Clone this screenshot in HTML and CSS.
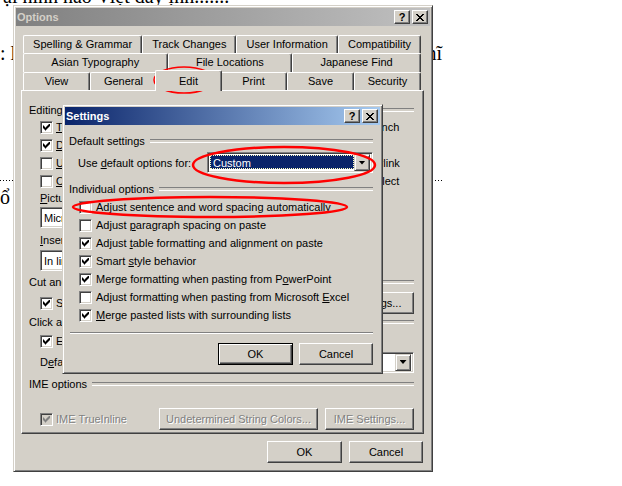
FILE: index.html
```html
<!DOCTYPE html>
<html>
  <head>
    <title>Options</title>
    <meta charset="utf-8" />
    <meta name="viewport" content="width=device-width, initial-scale=1.0" />
    <link rel="stylesheet" href="styles.css">
  </head>
  <body>
    <div class="doc">
      <p class="doc-line doc-top">ại hình nào Việt đây ịnh.......</p>
      <p class="doc-line doc-mid"><span>: l</span><span>nĩ</span></p>
      <div class="doc-rule"></div>
      <p class="doc-line doc-low"><span>ổ</span></p>
    </div>

    <div class="window options">
      <div class="titlebar idle">
        <span>Options</span>
        <span class="tbtns">
          <span class="tbtn">?</span>
          <span class="tbtn">
            <svg width="8" height="7" viewBox="0 0 8 7" shape-rendering="crispEdges"><path d="M0 0h2v1h-2z M6 0h2v1h-2z M1 1h2v1h-2z M5 1h2v1h-2z M2 2h4v1h-4z M3 3h2v1h-2z M2 4h4v1h-4z M1 5h2v1h-2z M5 5h2v1h-2z M0 6h2v1h-2z M6 6h2v1h-2z"/></svg>
          </span>
        </span>
      </div>

      <div class="tabs">
        <div class="tabrow">
          <div class="tab">Spelling &amp; Grammar</div>
          <div class="tab">Track Changes</div>
          <div class="tab">User Information</div>
          <div class="tab">Compatibility</div>
        </div>
        <div class="tabrow mid">
          <div class="tab">Asian Typography</div>
          <div class="tab">File Locations</div>
          <div class="tab">Japanese Find</div>
        </div>
        <div class="tabrow front">
          <div class="tab">View</div>
          <div class="tab">General</div>
          <div class="tab on">Edit</div>
          <div class="tab">Print</div>
          <div class="tab">Save</div>
          <div class="tab">Security</div>
        </div>
      </div>

      <div class="panel">
        <div class="group">Editing options</div>
        <div class="checks">
          <label class="check"><span class="cb on"></span><span><u>T</u>yping replaces selection</span></label>
          <label class="check"><span class="cb on"></span><span>Allow accented uppercase in French</span></label>
          <label class="check"><span class="cb on"></span><span><u>D</u>rag-and-drop text editing</span></label>
          <label class="check"><span class="cb"></span><span>Use smart cursoring</span></label>
          <label class="check"><span class="cb"></span><span><u>U</u>se the INS key for paste</span></label>
          <label class="check"><span class="cb on"></span><span>Use CTRL + Click to follow hyperlink</span></label>
          <label class="check"><span class="cb"></span><span><u>O</u>vertype mode</span></label>
          <label class="check"><span class="cb on"></span><span>When selecting, automatically select entire word</span></label>
        </div>

        <div class="field"><u>P</u>icture editor:</div>
        <div class="combo side"><span class="value">Microsoft Word</span><span class="drop"><span class="arrow"></span></span></div>
        <div class="field gap4"><u>I</u>nsert/paste pictures as:</div>
        <div class="combo side gap2"><span class="value">In line with text</span><span class="drop"><span class="arrow"></span></span></div>

        <div class="group gap3">Cut and paste options</div>
        <div class="row tall gap2">
          <label class="check"><span class="cb on"></span><span>Show Paste Options buttons</span></label>
          <span class="btn settings-btn">Settings...</span>
        </div>

        <div class="group">Click and type</div>
        <div class="row gap2">
          <label class="check"><span class="cb on"></span><span>Enable click and type</span></label>
        </div>
        <div class="row tall gap1">
          <span>D<u>e</u>fault paragraph style:</span>
          <div class="combo style-box"><span class="value">Normal</span><span class="drop"><span class="arrow"></span></span></div>
        </div>

        <div class="group gap3">IME options</div>
        <div class="row tall ime">
          <label class="check muted"><span class="cb on dim"></span><span>IME TrueInline</span></label>
          <span class="btn-pair">
            <span class="btn muted colors-btn">Undetermined String Colors...</span>
            <span class="btn muted ime-btn">IME Settings...</span>
          </span>
        </div>
      </div>

      <div class="actions">
        <span class="btn">OK</span>
        <span class="btn">Cancel</span>
      </div>
    </div>

    <div class="window settings">
      <div class="titlebar">
        <span>Settings</span>
        <span class="tbtns">
          <span class="tbtn">?</span>
          <span class="tbtn">
            <svg width="8" height="7" viewBox="0 0 8 7" shape-rendering="crispEdges"><path d="M0 0h2v1h-2z M6 0h2v1h-2z M1 1h2v1h-2z M5 1h2v1h-2z M2 2h4v1h-4z M3 3h2v1h-2z M2 4h4v1h-4z M1 5h2v1h-2z M5 5h2v1h-2z M0 6h2v1h-2z M6 6h2v1h-2z"/></svg>
          </span>
        </span>
      </div>

      <div class="settings-body">
        <div class="group">Default settings</div>
        <div class="use-row">
          <span>Use <u>d</u>efault options for:</span>
          <div class="combo use-box"><span class="value picked">Custom</span><span class="drop"><span class="arrow"></span></span></div>
        </div>

        <div class="group gap8">Individual options</div>
        <div class="list">
          <label class="check"><span class="cb"></span><span>Adjust sentence and word spacing automatically</span></label>
          <label class="check"><span class="cb"></span><span>Adjust <u>p</u>aragraph spacing on paste</span></label>
          <label class="check"><span class="cb on"></span><span>Adjust <u>t</u>able formatting and alignment on paste</span></label>
          <label class="check"><span class="cb on"></span><span>Smart <u>s</u>tyle behavior</span></label>
          <label class="check"><span class="cb on"></span><span>Merge formatting when pasting from P<u>o</u>werPoint</span></label>
          <label class="check"><span class="cb"></span><span>Adjust formatting when pasting from Microsoft <u>E</u>xcel</span></label>
          <label class="check"><span class="cb on"></span><span><u>M</u>erge pasted lists with surrounding lists</span></label>
        </div>

        <div class="sep"></div>
        <div class="settings-actions">
          <span class="btn default">OK</span>
          <span class="btn">Cancel</span>
        </div>
      </div>
    </div>

    <svg class="marks" width="622" height="486" viewBox="0 0 622 486">
      <ellipse cx="184" cy="80" rx="30" ry="13" stroke-width="1.5" />
      <ellipse cx="284" cy="165" rx="91" ry="18" stroke-width="2.5" />
      <ellipse cx="210" cy="207" rx="137" ry="10" stroke-width="2.5" />
    </svg>
  </body>
</html>
```

FILE: styles.css
```css
* {
  box-sizing: border-box;
}
body {
  margin: 0;
  width: 622px;
  height: 486px;
  position: relative;
  overflow: hidden;
  background: #fff;
  color: #000;
  font: 11px "Liberation Sans", Arial, sans-serif;
}

/* document page under the dialogs */
.doc-line {
  margin: 0;
  width: 442px;
  height: 24px;
  display: flex;
  justify-content: space-between;
  font: 20px/24px "Liberation Serif", "DejaVu Serif", serif;
  white-space: nowrap;
}
.doc-top {
  margin-top: -16px;
  padding-left: 3px;
}
.doc-mid {
  margin-top: 33px;
}
.doc-rule {
  width: 442px;
  height: 1px;
  margin-top: 115px;
  background: repeating-linear-gradient(to right, #000 0 1px, transparent 1px 3px);
}
.doc-low {
  margin-top: 4px;
}

/* win2000 window chrome */
.window {
  position: absolute;
  display: flex;
  flex-direction: column;
  background: #d4d0c8;
  border: 1px solid;
  border-color: #d4d0c8 #404040 #404040 #d4d0c8;
  box-shadow: inset 1px 1px #fff, inset -1px -1px #808080;
  padding: 2px;
}
.options {
  left: 13px;
  top: 5px;
  width: 420px;
  height: 467px;
}
.settings {
  left: 62px;
  top: 104px;
  width: 321px;
  height: 270px;
}

.titlebar {
  flex: none;
  height: 18px;
  display: flex;
  align-items: center;
  justify-content: space-between;
  padding: 0 2px 0 1px;
  font-weight: bold;
  color: #fff;
  background: linear-gradient(to right, #0a246a, #a6caf0);
}
.titlebar.idle {
  color: #d4d0c8;
  background: linear-gradient(to right, #808080, #c0c0c0);
}
.tbtns {
  display: flex;
  gap: 2px;
}
.tbtn {
  width: 16px;
  height: 14px;
  display: flex;
  align-items: center;
  justify-content: center;
  background: #d4d0c8;
  border: 1px solid;
  border-color: #fff #404040 #404040 #fff;
  box-shadow: inset -1px -1px #808080;
  color: #000;
  font-weight: bold;
  line-height: 12px;
}

/* property sheet tabs */
.tabs {
  margin: 9px 9px 0 7px;
}
.tabrow {
  display: flex;
  height: 18px;
}
.tabrow.mid {
  height: 19px;
}
.tab {
  flex: 1 1 auto;
  border: 1px solid;
  border-bottom: 0;
  border-color: #fff #404040 #fff #fff;
  border-radius: 2px 2px 0 0;
  box-shadow: inset -1px 0 #808080;
  text-align: center;
  line-height: 16px;
  white-space: nowrap;
}
.tabrow.front .tab {
  flex: 1 1 0;
}
.tab.on {
  position: relative;
  z-index: 1;
  margin: -2px -2px -1px;
  padding-top: 2px;
  background: #d4d0c8;
}

.panel {
  flex: none;
  height: 344px;
  margin: 0 6px 0 5px;
  padding: 11px 9px 0 7px;
  display: flex;
  flex-direction: column;
  border: 1px solid;
  border-color: #fff #404040 #404040 #fff;
  box-shadow: inset -1px -1px #808080;
}

/* group header with etched line */
.group {
  display: flex;
  align-items: center;
  gap: 5px;
  height: 16px;
  white-space: nowrap;
}
.group::after {
  content: "";
  flex: 1;
  height: 2px;
  border-top: 1px solid #808080;
  border-bottom: 1px solid #fff;
}

.checks {
  margin-left: 11px;
  display: grid;
  grid-template-columns: 166px 194px;
  grid-auto-rows: 18px;
}
.check {
  display: flex;
  align-items: center;
  gap: 3px;
  height: 18px;
  white-space: nowrap;
  overflow: hidden;
}
.cb {
  flex: none;
  width: 13px;
  height: 13px;
  background: #fff;
  border: 1px solid;
  border-color: #808080 #fff #fff #808080;
  box-shadow: inset 1px 1px #404040, inset -1px -1px #d4d0c8;
}
.cb.on::after {
  content: "";
  display: block;
  width: 7px;
  height: 7px;
  margin: 2px;
  background: #000;
  clip-path: polygon(0 2px, 1px 2px, 1px 3px, 2px 3px, 2px 4px, 3px 4px, 3px 3px, 4px 3px, 4px 2px, 5px 2px, 5px 1px, 6px 1px, 6px 0, 7px 0, 7px 3px, 6px 3px, 6px 4px, 5px 4px, 5px 5px, 4px 5px, 4px 6px, 3px 6px, 3px 7px, 2px 7px, 2px 6px, 1px 6px, 1px 5px, 0 5px);
}
.cb.dim {
  background: #d4d0c8;
}
.cb.dim::after {
  background: #808080;
}

.field {
  margin-left: 11px;
  height: 16px;
  line-height: 16px;
}

.combo {
  display: flex;
  align-items: center;
  height: 21px;
  padding: 2px;
  background: #fff;
  border: 1px solid;
  border-color: #808080 #fff #fff #808080;
  box-shadow: inset 1px 1px #404040, inset -1px -1px #d4d0c8;
}
.combo .value {
  flex: 1;
  padding-left: 1px;
  white-space: nowrap;
  overflow: hidden;
}
.combo .drop {
  flex: none;
  width: 16px;
  height: 17px;
  display: flex;
  align-items: center;
  justify-content: center;
  background: #d4d0c8;
  border: 1px solid;
  border-color: #d4d0c8 #404040 #404040 #d4d0c8;
  box-shadow: inset 1px 1px #fff, inset -1px -1px #808080;
}
.arrow {
  width: 7px;
  height: 4px;
  background: #000;
  clip-path: polygon(0 0, 7px 0, 3.5px 4px);
}
.side {
  width: 170px;
  margin-left: 11px;
  margin-top: 1px;
}
.style-box {
  width: 160px;
}
.use-box {
  width: 166px;
}
.value.picked {
  align-self: stretch;
  margin-bottom: 1px;
  padding-left: 2px;
  line-height: 14px;
  color: #fff;
  background: #0a246a;
  border: 1px dotted #ffffc0;
}

.row {
  display: flex;
  align-items: center;
  justify-content: space-between;
  margin-left: 11px;
  height: 18px;
}
.row.tall {
  height: 22px;
}
.row.ime {
  margin-top: 16px;
}

.gap1 { margin-top: 1px; }
.gap2 { margin-top: 2px; }
.gap3 { margin-top: 3px; }
.gap4 { margin-top: 4px; }
.gap8 { margin-top: 8px; }

/* push buttons */
.btn {
  display: flex;
  align-items: center;
  justify-content: center;
  height: 22px;
  width: 75px;
  background: #d4d0c8;
  border: 1px solid;
  border-color: #fff #404040 #404040 #fff;
  box-shadow: inset -1px -1px #808080;
  white-space: nowrap;
}
.btn.default {
  border-color: #000;
  box-shadow: inset 1px 1px #fff, inset -1px -1px #404040, inset -2px -2px #808080;
}
.settings-btn {
  width: 74px;
}
.btn-pair {
  display: flex;
  gap: 7px;
}
.colors-btn {
  width: 159px;
}
.ime-btn {
  width: 89px;
}
.muted {
  color: #808080;
  text-shadow: 1px 1px #fff;
}

.actions {
  display: flex;
  justify-content: flex-end;
  gap: 7px;
  margin-top: 7px;
  padding-right: 7px;
}
.actions .btn:last-child {
  width: 74px;
}

/* settings dialog body */
.settings-body {
  display: flex;
  flex-direction: column;
  padding: 8px 7px 0 4px;
}
.use-row {
  display: flex;
  align-items: center;
  justify-content: space-between;
  height: 21px;
  margin-top: 3px;
  padding-left: 9px;
}
.list {
  margin: 1px 0 0 10px;
}
.list .check {
  gap: 4px;
}
.sep {
  height: 2px;
  margin: 8px 0 0 1px;
  border-top: 1px solid #808080;
  border-bottom: 1px solid #fff;
}
.settings-actions {
  display: flex;
  justify-content: flex-end;
  gap: 6px;
  margin-top: 9px;
}
.settings-actions .btn:last-child {
  width: 74px;
}

/* red marker rings drawn on top */
.marks {
  position: absolute;
  left: 0;
  top: 0;
  pointer-events: none;
}
.marks ellipse {
  fill: none;
  stroke: #f00;
}
```
